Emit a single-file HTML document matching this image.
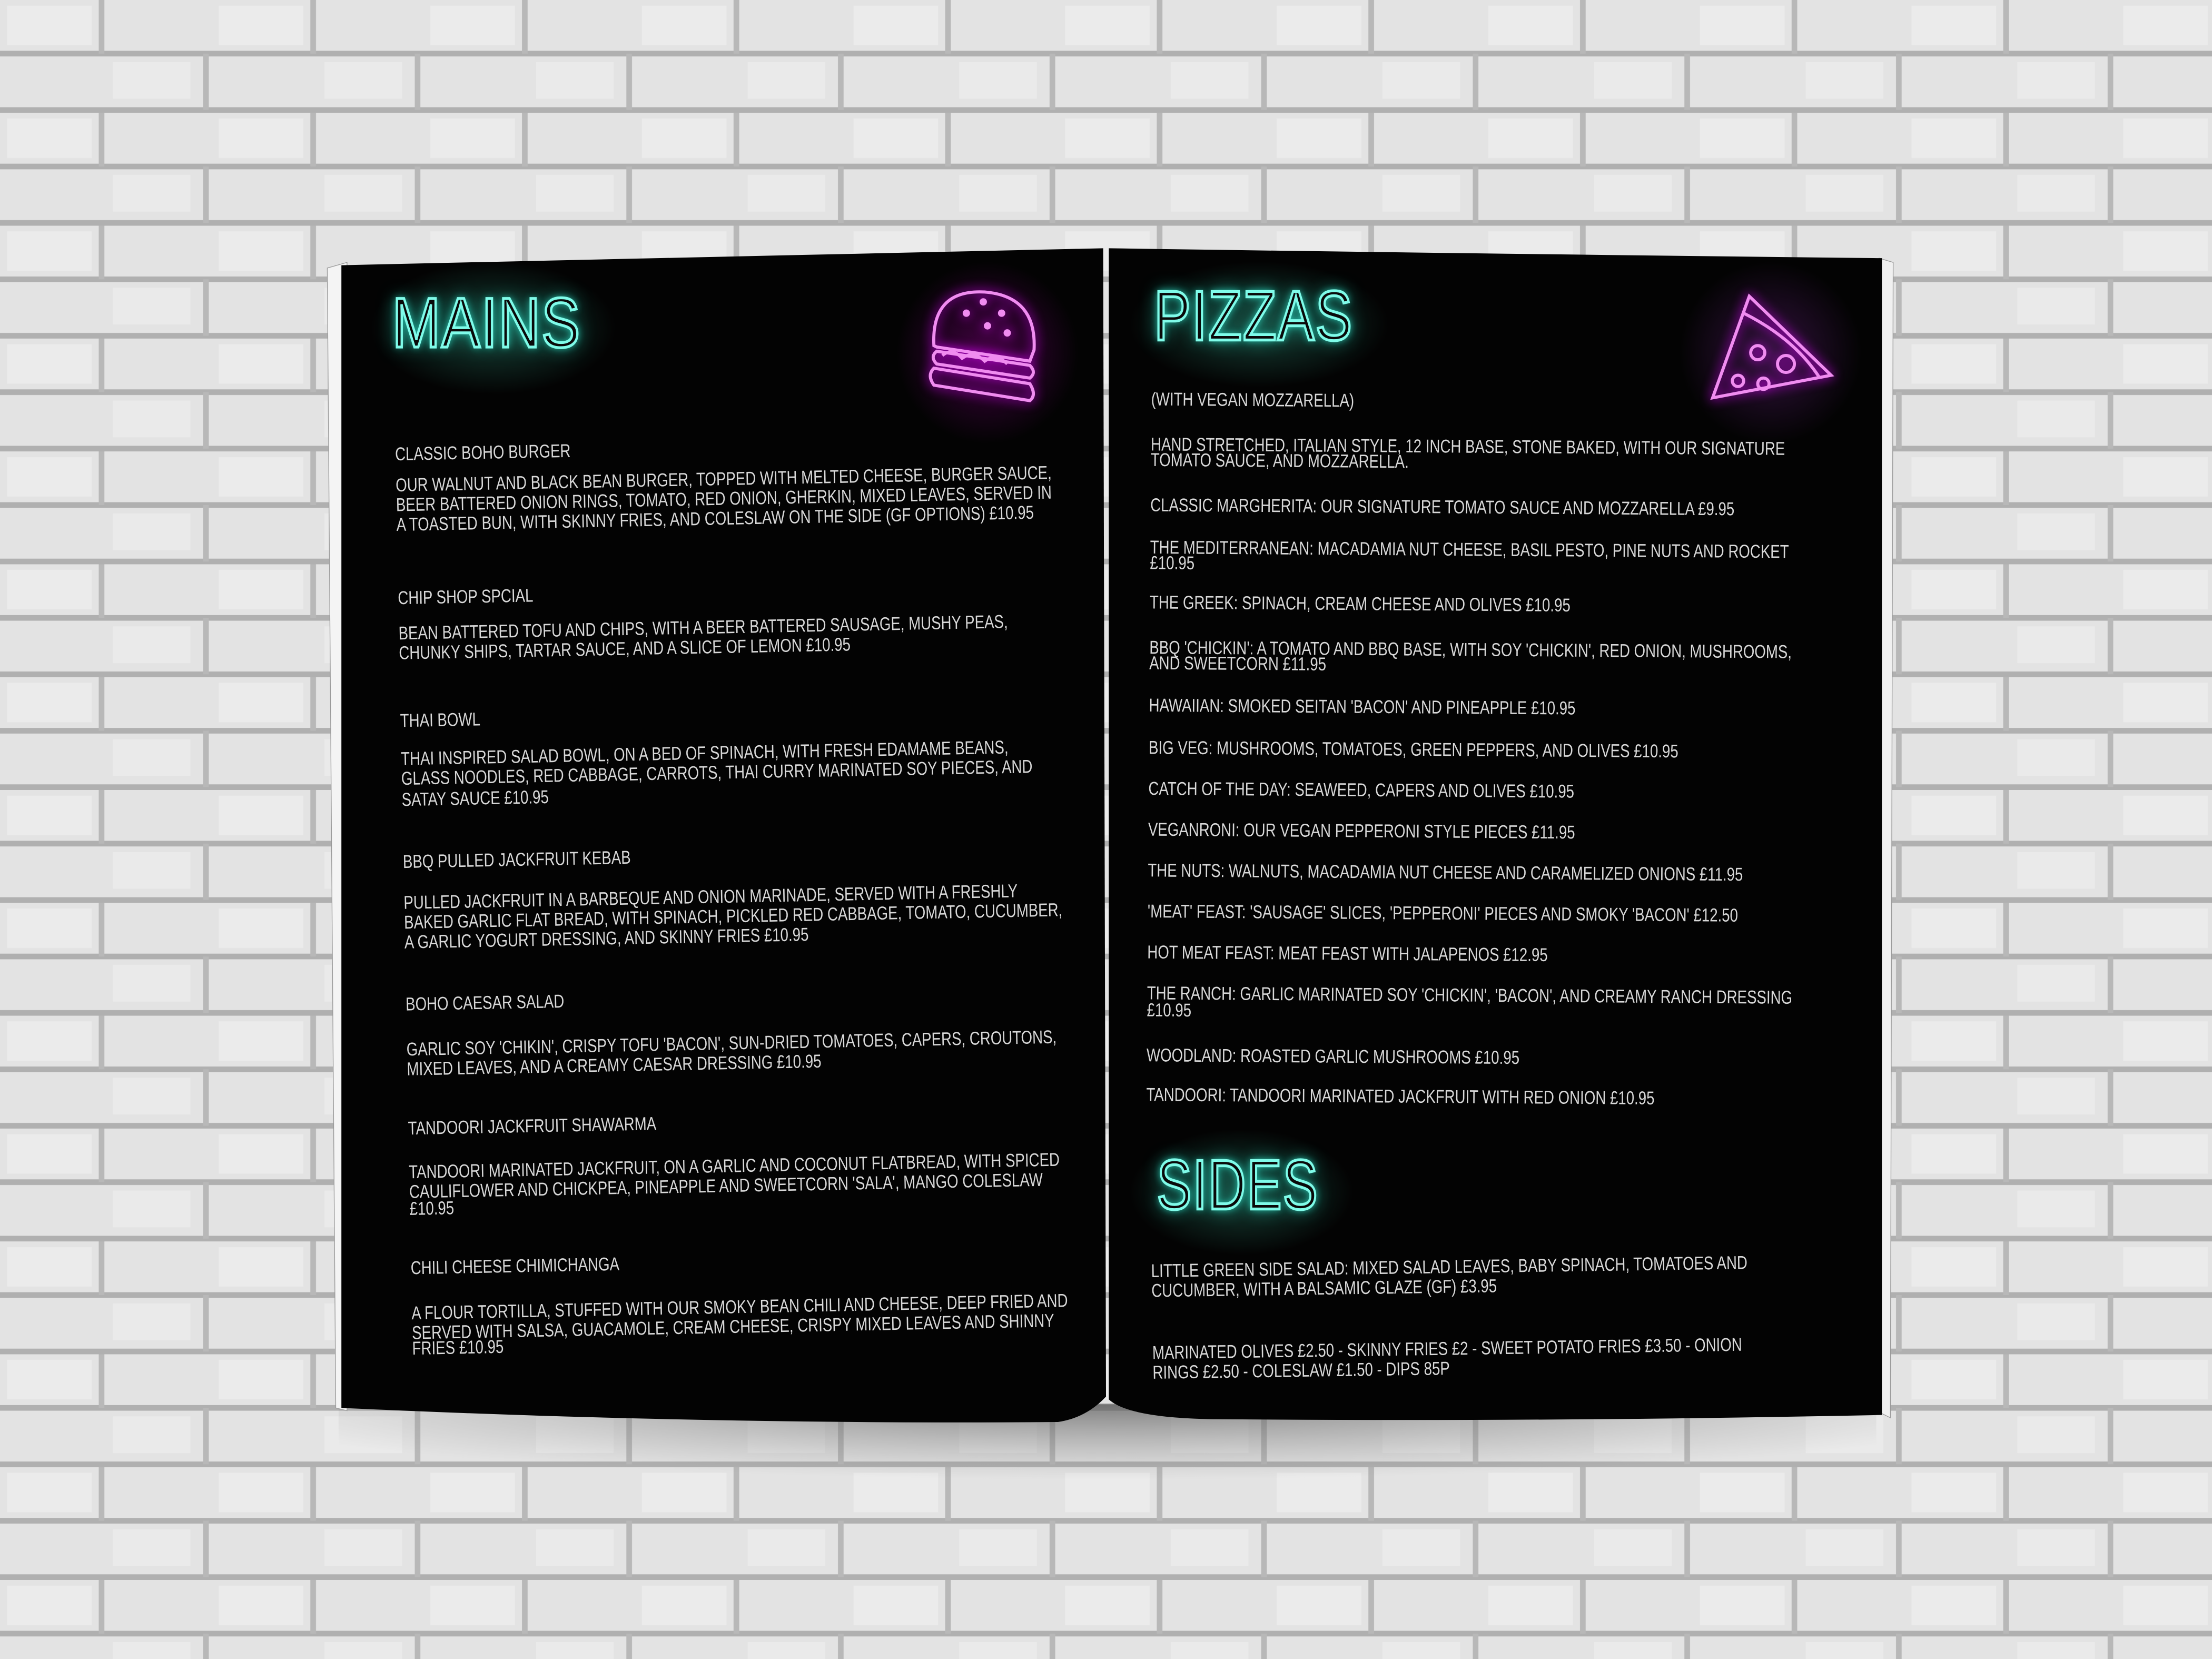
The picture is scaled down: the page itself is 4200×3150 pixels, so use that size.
<!DOCTYPE html>
<html><head><meta charset="utf-8"><style>
html,body{margin:0;padding:0;width:4200px;height:3150px;overflow:hidden;background:#e4e4e4}
#s{position:absolute;left:0;top:0;width:1568px;height:1176px;transform:scale(2.678571);transform-origin:0 0}
.t{position:absolute;white-space:nowrap;font-family:"Liberation Sans",sans-serif;font-size:12px;color:#d8d8d8;text-transform:uppercase;transform:scale(0.86,1.1);transform-origin:0 50%;line-height:13px}
.h{position:absolute;font-family:"Liberation Sans",sans-serif;color:#0a0a0a;-webkit-text-stroke:2px #7ffbe9;font-size:50px;letter-spacing:1px;text-shadow:0 0 6px #2fe0c8,0 0 14px #1aa894;line-height:50px;transform-origin:0 0}
.gl{position:absolute;border-radius:30px;background:radial-gradient(ellipse at center,rgba(40,120,100,.55),rgba(40,120,100,0) 70%)}
</style></head><body>
<div id="s">
<svg width="1568" height="1176" style="position:absolute;left:0;top:0">
<defs>
<pattern id="b" width="150" height="80" patternUnits="userSpaceOnUse">
<rect width="150" height="80" fill="#e3e3e3"/>
<rect x="0" y="36" width="150" height="4" fill="#b0b0b0"/>
<rect x="0" y="76" width="150" height="4" fill="#b0b0b0"/>
<rect x="70" y="0" width="4" height="38" fill="#b8b8b8"/>
<rect x="144" y="38" width="4" height="40" fill="#b8b8b8"/>
<rect x="5" y="4" width="60" height="28" fill="#f0f0f0" opacity=".6"/>
<rect x="80" y="44" width="55" height="26" fill="#f2f2f2" opacity=".5"/>
</pattern>
<radialGradient id="sh" cx="50%" cy="0%" r="60%"><stop offset="0" stop-color="#555" stop-opacity=".7"/><stop offset="1" stop-color="#888" stop-opacity="0"/></radialGradient>
</defs>
<rect width="1568" height="1176" fill="url(#b)"/>
<rect x="240" y="995" width="1090" height="90" fill="url(#sh)"/>
<path d="M232 190 L246 186 L246 1000 L238 998 Z" fill="#f4f4f4" stroke="#999" stroke-width=".5"/>
<path d="M1332 183 L1342 186 L1340 1005 L1330 1000 Z" fill="#f0f0f0" stroke="#999" stroke-width=".5"/>
<path d="M242 188 Q510 182 782 176 L784 990 Q770 1005 750 1008 Q500 1010 242 998 Z" fill="#030303"/>
<path d="M786 176 Q1060 180 1334 183 L1334 1003 Q1100 1008 860 1006 Q800 1005 786 992 Z" fill="#030303"/>
</svg>
<div class="gl" style="left:262px;top:185px;width:175px;height:95px"></div>
<div class="gl" style="left:800px;top:185px;width:185px;height:90px"></div>
<div class="gl" style="left:800px;top:800px;width:160px;height:90px"></div>
<div style="position:absolute;left:630px;top:180px;width:140px;height:140px;border-radius:50%;background:radial-gradient(circle,rgba(120,0,120,.55),rgba(120,0,120,0) 65%)"></div>
<div style="position:absolute;left:1185px;top:180px;width:140px;height:140px;border-radius:50%;background:radial-gradient(circle,rgba(90,30,110,.55),rgba(90,30,110,0) 65%)"></div>

<div class="h" style="left:278px;top:204px;transform:scale(0.82,1)">MAINS</div>
<div class="h" style="left:818px;top:199px;transform:scale(0.78,1)">PIZZAS</div>
<div class="h" style="left:820px;top:815px;transform:scale(0.74,1)">SIDES</div>

<svg width="1568" height="1176" style="position:absolute;left:0;top:0" fill="none" stroke="#f08cf0" stroke-width="2.2">
<g style="filter:drop-shadow(0 0 4px #d0f)">
<path d="M662 245 Q660 205 698 207 Q735 210 733 248 L730 256 L664 246 Z"/>
<path d="M664 249 L730 259 Q735 264 730 268 L664 258 Q659 253 664 249 Z"/>
<path d="M662 261 L730 272 Q735 280 730 284 L662 273 Q657 266 662 261 Z"/>
<path d="M668 252 Q675 246 682 254 Q690 248 698 256 Q706 250 714 258"/>
<circle cx="697" cy="214" r="1.5" fill="#f08cf0"/><circle cx="685" cy="222" r="1.5" fill="#f08cf0"/><circle cx="710" cy="222" r="1.5" fill="#f08cf0"/><circle cx="700" cy="231" r="1.5" fill="#f08cf0"/><circle cx="714" cy="236" r="1.5" fill="#f08cf0"/>
<path d="M1240 210 L1298 266 L1214 282 Z"/>
<path d="M1236 222 Q1272 240 1290 268"/>
<circle cx="1246" cy="250" r="5"/><circle cx="1266" cy="258" r="6"/><circle cx="1232" cy="270" r="4"/><circle cx="1250" cy="272" r="4"/>
</g>
</svg>

<div style="position:absolute;left:0;top:0;transform:rotate(-1.1deg);transform-origin:280px 320px">
<div class="t" style="left:280px;top:316px">CLASSIC BOHO BURGER</div>
<div class="t" style="left:280px;top:338px">OUR WALNUT AND BLACK BEAN BURGER, TOPPED WITH MELTED CHEESE, BURGER SAUCE,</div>
<div class="t" style="left:280px;top:352px">BEER BATTERED ONION RINGS, TOMATO, RED ONION, GHERKIN, MIXED LEAVES, SERVED IN</div>
<div class="t" style="left:280px;top:366px">A TOASTED BUN, WITH SKINNY FRIES, AND COLESLAW ON THE SIDE (GF OPTIONS) £10.95</div>
<div class="t" style="left:280px;top:418px">CHIP SHOP SPCIAL</div>
<div class="t" style="left:280px;top:443px">BEAN BATTERED TOFU AND CHIPS, WITH A BEER BATTERED SAUSAGE, MUSHY PEAS,</div>
<div class="t" style="left:280px;top:457px">CHUNKY SHIPS, TARTAR SAUCE, AND A SLICE OF LEMON £10.95</div>
<div class="t" style="left:280px;top:505px">THAI BOWL</div>
<div class="t" style="left:280px;top:532px">THAI INSPIRED SALAD BOWL, ON A BED OF SPINACH, WITH FRESH EDAMAME BEANS,</div>
<div class="t" style="left:280px;top:546px">GLASS NOODLES, RED CABBAGE, CARROTS, THAI CURRY MARINATED SOY PIECES, AND</div>
<div class="t" style="left:280px;top:561px">SATAY SAUCE £10.95</div>
<div class="t" style="left:280px;top:605px">BBQ PULLED JACKFRUIT KEBAB</div>
<div class="t" style="left:280px;top:634px">PULLED JACKFRUIT IN A BARBEQUE AND ONION MARINADE, SERVED WITH A FRESHLY</div>
<div class="t" style="left:280px;top:648px">BAKED GARLIC FLAT BREAD, WITH SPINACH, PICKLED RED CABBAGE, TOMATO, CUCUMBER,</div>
<div class="t" style="left:280px;top:662px">A GARLIC YOGURT DRESSING, AND SKINNY FRIES £10.95</div>
<div class="t" style="left:280px;top:706px">BOHO CAESAR SALAD</div>
<div class="t" style="left:280px;top:738px">GARLIC SOY 'CHIKIN', CRISPY TOFU 'BACON', SUN-DRIED TOMATOES, CAPERS, CROUTONS,</div>
<div class="t" style="left:280px;top:752px">MIXED LEAVES, AND A CREAMY CAESAR DRESSING £10.95</div>
<div class="t" style="left:280px;top:794px">TANDOORI JACKFRUIT SHAWARMA</div>
<div class="t" style="left:280px;top:825px">TANDOORI MARINATED JACKFRUIT, ON A GARLIC AND COCONUT FLATBREAD, WITH SPICED</div>
<div class="t" style="left:280px;top:839px">CAULIFLOWER AND CHICKPEA, PINEAPPLE AND SWEETCORN 'SALA', MANGO COLESLAW</div>
<div class="t" style="left:280px;top:851px">£10.95</div>
<div class="t" style="left:280px;top:893px">CHILI CHEESE CHIMICHANGA</div>
<div class="t" style="left:280px;top:925px">A FLOUR TORTILLA, STUFFED WITH OUR SMOKY BEAN CHILI AND CHEESE, DEEP FRIED AND</div>
<div class="t" style="left:280px;top:939px">SERVED WITH SALSA, GUACAMOLE, CREAM CHEESE, CRISPY MIXED LEAVES AND SHINNY</div>
<div class="t" style="left:280px;top:950px">FRIES £10.95</div>
</div>

<div style="position:absolute;left:0;top:0;transform:rotate(0.4deg);transform-origin:816px 280px">
<div class="t" style="left:816px;top:277px">(WITH VEGAN MOZZARELLA)</div>
<div class="t" style="left:816px;top:309px">HAND STRETCHED, ITALIAN STYLE, 12 INCH BASE, STONE BAKED, WITH OUR SIGNATURE</div>
<div class="t" style="left:816px;top:320px">TOMATO SAUCE, AND MOZZARELLA.</div>
<div class="t" style="left:816px;top:352px">CLASSIC MARGHERITA: OUR SIGNATURE TOMATO SAUCE AND MOZZARELLA £9.95</div>
<div class="t" style="left:816px;top:382px">THE MEDITERRANEAN: MACADAMIA NUT CHEESE, BASIL PESTO, PINE NUTS AND ROCKET</div>
<div class="t" style="left:816px;top:393px">£10.95</div>
<div class="t" style="left:816px;top:421px">THE GREEK: SPINACH, CREAM CHEESE AND OLIVES £10.95</div>
<div class="t" style="left:816px;top:453px">BBQ 'CHICKIN': A TOMATO AND BBQ BASE, WITH SOY 'CHICKIN', RED ONION, MUSHROOMS,</div>
<div class="t" style="left:816px;top:464px">AND SWEETCORN £11.95</div>
<div class="t" style="left:816px;top:494px">HAWAIIAN: SMOKED SEITAN 'BACON' AND PINEAPPLE £10.95</div>
<div class="t" style="left:816px;top:524px">BIG VEG: MUSHROOMS, TOMATOES, GREEN PEPPERS, AND OLIVES £10.95</div>
<div class="t" style="left:816px;top:553px">CATCH OF THE DAY: SEAWEED, CAPERS AND OLIVES £10.95</div>
<div class="t" style="left:816px;top:582px">VEGANRONI: OUR VEGAN PEPPERONI STYLE PIECES £11.95</div>
<div class="t" style="left:816px;top:611px">THE NUTS: WALNUTS, MACADAMIA NUT CHEESE AND CARAMELIZED ONIONS £11.95</div>
<div class="t" style="left:816px;top:640px">'MEAT' FEAST: 'SAUSAGE' SLICES, 'PEPPERONI' PIECES AND SMOKY 'BACON' £12.50</div>
<div class="t" style="left:816px;top:669px">HOT MEAT FEAST: MEAT FEAST WITH JALAPENOS £12.95</div>
<div class="t" style="left:816px;top:698px">THE RANCH: GARLIC MARINATED SOY 'CHICKIN', 'BACON', AND CREAMY RANCH DRESSING</div>
<div class="t" style="left:816px;top:710px">£10.95</div>
<div class="t" style="left:816px;top:742px">WOODLAND: ROASTED GARLIC MUSHROOMS £10.95</div>
<div class="t" style="left:816px;top:770px">TANDOORI: TANDOORI MARINATED JACKFRUIT WITH RED ONION £10.95</div>
</div>
<div style="position:absolute;left:0;top:0;transform:rotate(-0.8deg);transform-origin:816px 900px">
<div class="t" style="left:816px;top:895px">LITTLE GREEN SIDE SALAD: MIXED SALAD LEAVES, BABY SPINACH, TOMATOES AND</div>
<div class="t" style="left:816px;top:909px">CUCUMBER, WITH A BALSAMIC GLAZE (GF) £3.95</div>
<div class="t" style="left:816px;top:953px">MARINATED OLIVES £2.50 - SKINNY FRIES £2 - SWEET POTATO FRIES £3.50 - ONION</div>
<div class="t" style="left:816px;top:967px">RINGS £2.50 - COLESLAW £1.50 - DIPS 85P</div>
</div>
</div>
</body></html>
